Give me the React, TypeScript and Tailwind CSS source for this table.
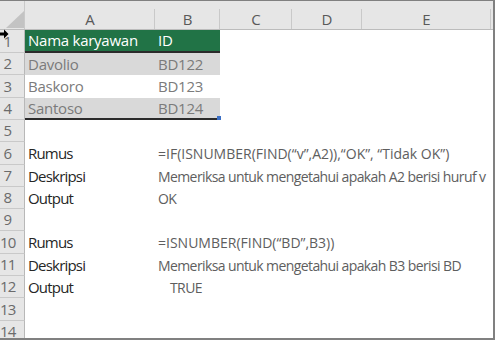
import React from "react";

const COLS = [
  { key: "A", w: "w-[130px]" },
  { key: "B", w: "w-[65px]" },
  { key: "C", w: "w-[72px]" },
  { key: "D", w: "w-[70px]" },
  { key: "E", w: "w-[129px]" },
];

type Row = {
  n: number;
  h: string;
  a?: string;
  b?: string;
  kind?: "head" | "gray" | "white" | "label";
  bIndent?: boolean;
  last?: boolean;
  formula?: boolean;
};

const rows: Row[] = [
  { n: 1, h: "h-[23px]", a: "Nama karyawan", b: "ID", kind: "head" },
  { n: 2, h: "h-[22px]", a: "Davolio", b: "BD122", kind: "gray" },
  { n: 3, h: "h-[23px]", a: "Baskoro", b: "BD123", kind: "white" },
  { n: 4, h: "h-[22px]", a: "Santoso", b: "BD124", kind: "gray", last: true },
  { n: 5, h: "h-[22px]" },
  { n: 6, h: "h-[23px]", a: "Rumus", b: "=IF(ISNUMBER(FIND(\u201Cv\u201D,A2)),\u201COK\u201D, \u201CTidak OK\u201D)", kind: "label", formula: true },
  { n: 7, h: "h-[22px]", a: "Deskripsi", b: "Memeriksa untuk mengetahui apakah A2 berisi huruf v", kind: "label" },
  { n: 8, h: "h-[22px]", a: "Output", b: "OK", kind: "label" },
  { n: 9, h: "h-[22px]" },
  { n: 10, h: "h-[23px]", a: "Rumus", b: "=ISNUMBER(FIND(\u201CBD\u201D,B3))", kind: "label", formula: true },
  { n: 11, h: "h-[22px]", a: "Deskripsi", b: "Memeriksa untuk mengetahui apakah B3 berisi BD", kind: "label" },
  { n: 12, h: "h-[22px]", a: "Output", b: "TRUE", kind: "label", bIndent: true },
  { n: 13, h: "h-[23px]" },
  { n: 14, h: "h-[22px]" },
];

function BodyRow({ r }: { r: Row }) {
  const isHead = r.kind === "head";
  const isGray = r.kind === "gray";
  const isTable = isHead || isGray || r.kind === "white";
  const cellBg = isHead ? "bg-[#217346]" : isGray ? "bg-[#d9d9d9]" : "bg-white";
  const txt = isHead ? "text-white" : "text-[#7b7b7b]";
  const bottom = isHead || r.last ? "border-b-2 border-[#2b2b2b]" : "";
  return (
    <div className={`flex ${r.h} shrink-0`}>
      <div className="w-[25px] shrink-0 bg-[#e6e6e6] border-r border-b border-r-[#b8b8b8] border-b-[#c9c9c9] flex items-center">
        <span className="w-[15px] text-center text-[15px] leading-none tracking-[-0.8px] text-[#6b6b6b]">
          {r.n}
        </span>
      </div>
      {isTable ? (
        <>
          <div className={`w-[130px] shrink-0 ${cellBg} ${bottom} flex items-center pl-[3px] text-[15px] tracking-[-0.25px] ${txt} whitespace-nowrap`}>
            {r.a}
          </div>
          <div className={`relative w-[65px] shrink-0 ${cellBg} ${bottom} flex items-center pl-[3px] text-[15px] tracking-[-0.25px] ${txt} whitespace-nowrap`}>
            {r.b}
            {r.last && (
              <div className="absolute right-[-1px] bottom-[-2px] w-[4px] h-[4px] bg-[#3b6fc5]" />
            )}
          </div>
        </>
      ) : (
        <div className="flex items-center flex-1 whitespace-nowrap">
          <div className="w-[130px] shrink-0 pl-[3px] text-[15px] tracking-[-0.8px] text-[#262626]">{r.a}</div>
          <div
            className={`${r.bIndent ? "pl-[15px]" : "pl-[3px]"} text-[14px] ${
              r.formula ? "tracking-[0px]" : "tracking-[-0.6px]"
            } text-[#5e5e5e]`}
          >
            {r.b}
          </div>
        </div>
      )}
    </div>
  );
}

export default function App() {
  return (
    <div
      className="relative w-[495px] h-[340px] overflow-hidden bg-white border-t border-r-2 border-b-2 border-[#808080] flex flex-col"
      style={{ fontFamily: '"Open Sans", "Noto Sans", sans-serif' }}
    >
      <div className="flex h-[29px] shrink-0 bg-[#e6e6e6] border-b border-[#bcbcbc]">
        <div className="relative w-[25px] shrink-0 border-r border-[#c9c9c9]">
          <svg className="absolute left-[6px] top-[10px]" width="18" height="17" viewBox="0 0 18 17">
            <polygon points="18,0 18,17 0,17" fill="#c3c3c3" />
          </svg>
        </div>
        {COLS.map((c) => (
          <div key={c.key} className={`relative ${c.w} shrink-0 flex items-center justify-center text-[15px] text-[#595959]`}>
            <span className="mt-[8px]">{c.key}</span>
            <div className="absolute right-0 top-[8px] bottom-0 w-px bg-[#c9c9c9]" />
          </div>
        ))}
      </div>
      {rows.map((r) => (
        <BodyRow key={r.n} r={r} />
      ))}
      <svg className="absolute left-0 top-[28px]" width="9" height="10" viewBox="0 0 9 10">
        <polygon points="0,3.5 4,3.5 4,0.5 8.5,5 4,9.5 4,6.5 0,6.5" fill="#000" />
      </svg>
    </div>
  );
}
